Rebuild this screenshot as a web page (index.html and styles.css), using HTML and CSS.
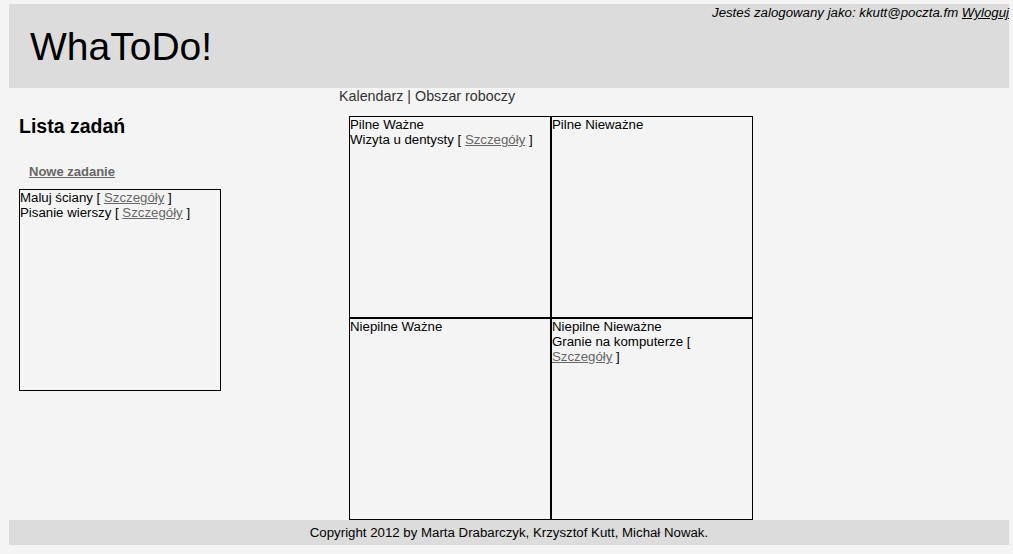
FILE: index.html
```html
<!DOCTYPE html>
<html lang="pl">
<head>
<meta charset="utf-8">
<title>WhaToDo!</title>
<link rel="stylesheet" href="styles.css">
</head>
<body>
<div class="page">
  <header class="header">
    <div class="login">Jesteś zalogowany jako: kkutt@poczta.fm <a href="#" class="logout">Wyloguj</a></div>
    <h1 class="logo">WhaToDo!</h1>
  </header>
  <main class="main">
    <section class="sidebar">
      <h2 class="sidebar-title">Lista zadań</h2>
      <a href="#" class="new-task">Nowe zadanie</a>
      <div class="task-box">
        <div>Maluj ściany [ <a href="#" class="details">Szczegóły</a> ]</div>
        <div>Pisanie wierszy [ <a href="#" class="details">Szczegóły</a> ]</div>
      </div>
    </section>
    <section class="workspace">
      <nav class="tabs">Kalendarz | Obszar roboczy</nav>
      <div class="matrix">
        <div class="cell">
          <div>Pilne Ważne</div>
          <div>Wizyta u dentysty [ <a href="#" class="details">Szczegóły</a> ]</div>
        </div>
        <div class="cell">
          <div>Pilne Nieważne</div>
        </div>
        <div class="cell">
          <div>Niepilne Ważne</div>
        </div>
        <div class="cell">
          <div>Niepilne Nieważne</div>
          <div>Granie na komputerze [ <a href="#" class="details">Szczegóły</a> ]</div>
        </div>
      </div>
    </section>
  </main>
  <footer class="footer">Copyright 2012 by Marta Drabarczyk, Krzysztof Kutt, Michał Nowak.</footer>
</div>
</body>
</html>
```
FILE: styles.css
```css
html, body {
  background: #f4f4f4;
}
body {
  margin: 4px 0 9px 9px;
  font-family: "Liberation Sans", Arial, sans-serif;
  font-size: 13.25px;
  line-height: 15px;
  color: #000;
}
.page {
  width: 1000px;
}
.header {
  background: #dcdcdc;
  height: 84px;
  padding-top: 1px;
  box-sizing: border-box;
}
.login {
  text-align: right;
  font-style: italic;
  line-height: 15px;
}
.logout {
  color: #000;
  text-decoration: underline;
}
.logo {
  margin: 4px 0 0 21px;
  font-size: 39px;
  line-height: 46px;
  font-weight: normal;
}
.main {
  display: flex;
  height: 432px;
}
.sidebar {
  width: 330px;
  padding-left: 10px;
  box-sizing: border-box;
}
.sidebar-title {
  margin: 27px 0 0;
  font-size: 19.5px;
  line-height: 22px;
  font-weight: bold;
}
.new-task {
  display: block;
  margin: 27px 0 0 10px;
  font-size: 13px;
  font-weight: bold;
  color: #666;
  text-decoration: underline;
  line-height: 15px;
}
.task-box {
  margin-top: 10px;
  width: 202px;
  height: 202px;
  box-sizing: border-box;
  border: 1px solid #000;
}
.details {
  color: #666;
  text-decoration: underline;
}
.workspace {
  display: flex;
  flex-direction: column;
}
.tabs {
  font-size: 14.3px;
  line-height: 17px;
  color: #333;
  margin-bottom: 11px;
}
.matrix {
  margin-left: 10px;
  display: grid;
  grid-template-columns: 202px 202px;
  grid-template-rows: 202px 202px;
}
.cell {
  border: 1px solid #000;
  box-sizing: border-box;
}
.footer {
  background: #dcdcdc;
  height: 25px;
  line-height: 25px;
  text-align: center;
}
```
